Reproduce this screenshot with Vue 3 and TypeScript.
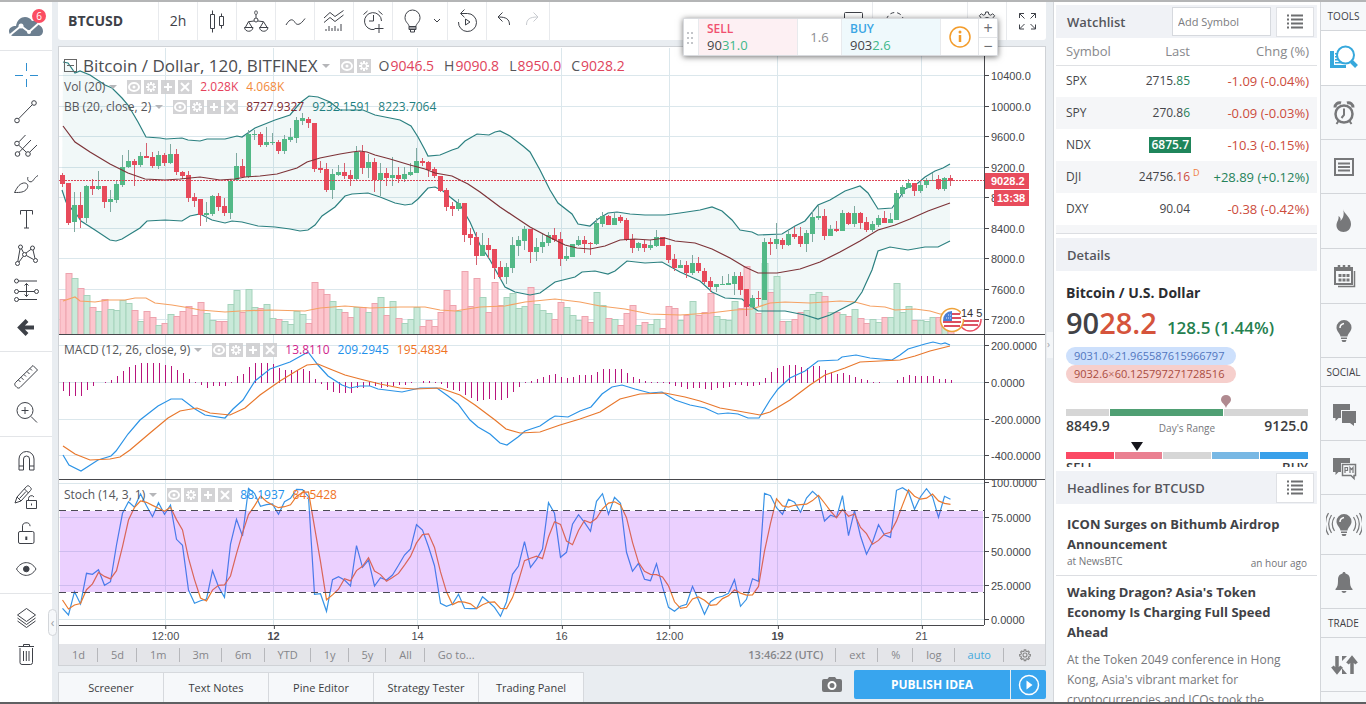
<script setup lang="ts">
import { ref } from 'vue'

type Tone = 'g' | 'r'
interface Bar { x: number; tone: Tone; top: number; bottom: number; high: number; low: number }

const STEP = 6
const FIRST = 62.5
const PLOT = { left: 59, top: 47, width: 925, height: 578 }

// tone, body top, body bottom, high, low
const candleSource = `r175,184,173,187 r183,223,183,225 g205,222,192,232 r205,218,192,228 g186,218,185,223 r186,189,179,195 g186,189,171,190 r186,202,186,208 g199,202,190,212 g184,200,180,203
g167,185,155,187 g161,167,150,168 r161,165,159,186 g156,165,152,167 r156,158,143,158 r157,166,152,168 g155,166,151,169 r155,163,153,166 g154,163,144,164 r154,172,149,175
r172,176,171,179 r175,198,171,202 r197,201,193,207 r199,215,199,226 g213,215,202,222 g196,214,195,216 r196,207,193,211 r206,213,198,216 g181,213,179,219 g166,180,153,180
r166,177,159,177 g134,177,130,178 g134,135,130,140 r134,145,132,147 g142,145,127,147 g142,143,133,145 r142,151,140,154 g139,151,135,154 g137,140,128,142 g120,138,117,143
g118,121,113,125 r119,123,117,128 r123,169,123,172 r168,170,161,173 r169,190,163,192 g174,190,169,199 g172,175,165,176 r172,176,163,179 r175,179,170,186 g152,179,146,180
r152,168,145,174 g162,168,154,178 r162,180,158,192 g173,180,163,196 r173,178,168,186 g175,178,157,186 r175,179,167,183 g174,179,167,182 g172,175,163,176 g161,173,148,173
r161,163,158,166 r162,170,161,177 r169,176,167,178 r176,191,176,192 r190,207,188,211 r206,209,202,216 g203,209,199,211 r203,235,203,242 r234,238,228,245 r237,256,232,265
g245,256,233,256 r245,250,238,258 r249,268,249,279 r267,277,261,280 g267,277,263,284 g245,268,237,273 g240,246,236,256 g229,241,226,250 r229,252,229,263 g247,252,238,261
g242,247,233,253 g235,243,232,246 r235,240,228,242 r239,259,232,266 g256,259,247,261 g244,257,244,257 g240,245,236,246 r240,244,236,253 r243,244,242,255 g223,244,218,245
g216,224,212,227 r216,225,215,225 g218,225,213,225 r217,221,215,223 r220,240,218,241 r239,248,234,253 g243,248,242,251 r244,248,240,252 g245,248,240,250 g237,246,230,247
r237,246,237,246 r245,260,245,263 r259,268,254,271 g265,268,260,268 r265,273,261,278 g263,273,255,275 r263,271,257,273 r271,282,268,284 r281,287,277,292 g284,287,284,292
g284,285,276,285 g283,285,274,285 g276,284,272,295 r276,290,272,295 r289,307,289,316 g298,307,295,308 r298,299,291,306 g242,300,238,300 r242,244,238,255 g239,244,223,249
r240,245,238,249 g234,245,230,246 r234,237,227,239 r236,244,227,247 g233,244,230,252 g217,234,211,242 g216,218,205,220 r216,236,209,240 g229,236,225,236 r229,231,221,232
g213,231,210,231 r213,224,212,225 g213,224,206,227 r213,223,212,229 r222,230,217,232 g224,230,221,232 g218,225,215,227 r218,223,211,223 g219,223,213,223 g193,220,190,220
g187,194,185,197 g183,188,179,188 r183,191,183,196 g185,191,182,193 g180,185,178,188 g180,181,173,181 r179,189,175,190 g178,189,177,191 r178,181,175,186`

const bars: Bar[] = candleSource.split(/\s+/).map((token, i) => {
  const [top, bottom, high, low] = token.slice(1).split(',').map(Number)
  return { x: FIRST + i * STEP, tone: token[0] as Tone, top, bottom, high, low }
})

const volumeTops = [
  299, 273, 278, 288, 295, 307, 311, 299, 309, 310, 300, 303, 310, 321, 311, 317, 325, 323, 314, 316, 311, 306, 315, 302, 313,
  320, 321, 321, 304, 290, 312, 289, 307, 308, 304, 318, 319, 321, 324, 311, 314, 323, 282, 289, 294, 301, 309, 312, 317, 307,
  307, 312, 303, 297, 315, 301, 318, 323, 319, 307, 326, 320, 326, 312, 290, 305, 311, 271, 306, 278, 297, 312, 282, 305, 297,
  293, 308, 306, 287, 304, 310, 313, 319, 302, 307, 315, 320, 316, 322, 292, 305, 318, 319, 325, 313, 305, 325, 322, 324, 319,
  328, 306, 308, 320, 315, 301, 315, 312, 293, 316, 319, 320, 301, 308, 266, 307, 313, 263, 292, 276, 321, 321, 319, 312, 310,
  294, 292, 296, 312, 312, 314, 316, 309, 318, 323, 319, 322, 317, 317, 283, 312, 306, 320, 320, 321, 317, 317, 318, 323,
]

const histogram = [
  -9, -14, -14, -14, -8, -4, 0, 1, 3, 7, 12, 16, 18, 20, 20, 20, 20, 18, 17, 13, 10, 4, 1, -3, -6, -4, -4, -4, 1, 7, 9, 16, 20,
  20, 20, 19, 15, 13, 13, 13, 14, 12, 4, -2, -8, -10, -11, -11, -11, -6, -6, -4, -4, -6, -5, -4, -3, -3, -1, 0, 2, 2, 1, -2, -6,
  -8, -9, -13, -16, -19, -18, -17, -18, -18, -16, -10, -5, 1, 2, 4, 6, 8, 9, 6, 5, 6, 8, 8, 8, 11, 14, 14, 14, 14, 10, 6, 4, 2,
  1, 1, 1, -2, -4, -5, -7, -6, -6, -7, -8, -6, -6, -5, -3, -3, -4, -4, -3, 5, 11, 15, 17, 18, 18, 16, 15, 17, 17, 13, 11, 9, 10,
  8, 6, 4, 3, 1, 1, 0, 0, 3, 6, 8, 7, 7, 7, 7, 4, 4, 3,
]

// thirds of a pixel below the 420 line
const stochSource = [
  565, 585, 515, 552, 460, 463, 449, 496, 485, 375, 280, 245, 262, 222, 257, 290, 248, 283, 255, 358, 376, 510, 550, 542, 537,
  452, 500, 532, 372, 298, 348, 205, 220, 259, 254, 252, 283, 245, 235, 208, 209, 230, 523, 521, 574, 479, 470, 480, 498, 377,
  442, 420, 498, 473, 480, 465, 436, 405, 387, 314, 330, 380, 437, 550, 559, 552, 523, 565, 566, 566, 530, 545, 562, 589, 546,
  463, 438, 365, 442, 418, 387, 248, 280, 412, 397, 313, 284, 307, 334, 244, 221, 283, 232, 250, 397, 454, 430, 478, 482, 431,
  500, 562, 574, 559, 553, 499, 540, 583, 545, 533, 529, 520, 479, 559, 538, 476, 484, 220, 227, 263, 283, 238, 247, 277, 234,
  214, 230, 303, 286, 292, 227, 347, 272, 348, 403, 367, 314, 345, 352, 211, 203, 215, 268, 230, 206, 230, 292, 229, 238,
]
const stochK = stochSource.map((v) => 420 + v / 3)
const stochD = stochK.map((v, i) => (i === 0 ? 600 : i === 1 ? 609 : (v + stochK[i - 1] + stochK[i - 2]) / 3))
const series = (values: number[]) => values.map((v, i) => `${FIRST + i * STEP},${v.toFixed(1)}`).join(' ')

const upper = '63,62 68,63 75,73 80,71 90,75 105,85 112,88 122,98 128,105 138,122 146,137 160,138 166,139 182,138 188,140 200,141 207,139 225,139 237,136 242,137 255,128 275,120 290,115 300,103 309,96 318,97 330,102 340,110 363,110 375,115 390,118 400,120 411,126 418,137 425,150 428,156 440,155 452,150 458,148 465,141 477,134 489,135 495,132 500,131 510,136 523,146 530,152 540,170 550,190 558,203 572,214 578,224 590,226 598,219 608,213 617,212 630,214 645,215 665,215 680,213 700,210 712,207 722,211 732,220 740,230 752,232 758,235 782,234 795,226 805,221 818,205 830,200 845,191 860,186 868,193 878,209 892,208 900,197 905,189 918,183 925,177 935,171 943,168 950,164'
const basis = '63,126 75,142 90,152 110,164 128,173 145,179 165,180 180,179 200,177 220,180 235,179 245,177 260,176 277,174 297,168 307,162 320,158 340,154 352,152 360,151 367,152 375,155 390,159 400,162 410,165 425,169 435,173 452,176 468,184 480,192 500,207 515,217 530,227 545,235 565,245 577,248 590,249 605,246 620,240 635,239 650,240 665,238 675,241 695,243 712,249 730,258 745,267 758,273 777,273 800,269 820,262 840,252 860,241 878,230 895,225 910,219 928,211 950,203'
const lower = '62,190 66,202 70,207 77,215 81,221 95,230 110,240 116,241 122,239 140,228 147,221 165,220 182,221 190,216 200,214 212,220 225,223 232,221 242,222 258,226 275,227 290,229 300,231 308,230 315,225 322,216 335,207 345,196 352,194 368,193 380,197 395,203 405,205 412,204 418,199 428,188 435,187 443,191 450,197 460,205 470,222 480,245 490,260 505,287 515,292 530,295 540,293 555,282 575,277 582,272 595,271 608,274 615,271 627,261 645,263 662,262 680,272 700,281 712,292 725,298 742,299 748,304 758,311 785,311 805,315 818,319 830,315 855,302 862,292 872,270 878,251 890,247 908,250 925,247 938,247 950,241'
const band = `${upper} ${lower.split(' ').reverse().join(' ')}`
const volumeAverage = '63,301 75,297 80,301 95,302 108,300 125,300 135,298 146,298 155,303 172,305 190,308 200,310 225,312 240,311 270,310 305,311 320,308 345,306 370,308 400,307 425,307 440,310 455,311 480,307 505,306 525,302 555,299 580,302 600,306 625,309 650,314 680,315 710,313 735,310 752,309 770,303 785,302 810,303 840,301 855,302 870,306 885,307 895,310 915,309 930,311 940,314 950,314'
const macd = '63,455 69,465 81,471 98,460 111,456 116,451 128,434 140,420 158,406 171,399 182,399 195,409 205,415 225,418 233,409 243,400 255,381 270,369 290,362 308,352 318,365 328,376 342,385 350,388 360,386 370,386 378,389 402,392 420,388 437,388 448,396 458,404 470,420 478,427 490,434 500,443 507,445 518,437 525,431 540,426 550,419 555,416 568,417 580,411 591,407 602,394 612,387 622,385 635,389 650,393 662,392 675,400 690,405 705,408 718,414 728,413 738,414 748,418 759,418 770,400 778,389 790,378 805,371 818,361 838,360 842,357 856,355 870,358 892,360 900,355 908,349 925,344 933,342 941,344 945,343 950,345'
const signal = '63,446 75,454 90,460 110,459 120,457 130,450 150,433 168,418 180,411 197,408 210,413 230,415 245,408 260,395 280,381 298,370 307,365 318,364 330,369 345,375 360,379 380,384 400,388 415,389 440,388 460,395 475,405 495,420 506,429 520,433 540,432 560,425 580,419 600,412 620,399 640,394 665,393 685,397 700,401 720,408 738,411 760,415 770,412 790,400 810,385 825,375 845,368 860,362 880,361 900,360 915,356 930,351 950,346'

const levels = [
  { y: 75, label: '10400.0' }, { y: 106, label: '10000.0' }, { y: 136, label: '9600.0' }, { y: 167, label: '9200.0' },
  { y: 197, label: '8800.0' }, { y: 228, label: '8400.0' }, { y: 258, label: '8000.0' }, { y: 289, label: '7600.0' },
  { y: 319, label: '7200.0' }, { y: 345, label: '200.0000' }, { y: 382, label: '0.0000' }, { y: 419, label: '-200.0000' },
  { y: 455, label: '-400.0000' }, { y: 483, label: '100.0000' }, { y: 517, label: '75.0000' }, { y: 551, label: '50.0000' },
  { y: 585, label: '25.0000' }, { y: 619, label: '0.0000' },
]
const times = [
  { x: 165, label: '12:00' }, { x: 273, label: '12', strong: true }, { x: 417, label: '14' }, { x: 561, label: '16' },
  { x: 669, label: '12:00' }, { x: 777, label: '19', strong: true }, { x: 921, label: '21' },
]
const pctY = (y: number) => `${((y - PLOT.top) / PLOT.height) * 100}%`
const pctX = (x: number) => `${((x - PLOT.left) / PLOT.width) * 100}%`

const gearPath = '<path d="M12.7 5h2.6l.5 2.4 1.9.8 2-1.4 1.9 1.9-1.4 2 .8 1.9 2.4.5v2.6l-2.4.5-.8 1.9 1.4 2-1.9 1.9-2-1.4-1.9.8-.5 2.4h-2.6l-.5-2.4-1.9-.8-2 1.4-1.9-1.9 1.4-2-.8-1.9-2.4-.5v-2.6l2.4-.5.8-1.9-1.4-2 1.9-1.9 2 1.4 1.9-.8z"/><circle cx="14" cy="14" r="3.5"/>'
const icons: Record<string, string> = {
  cross: '<g stroke="#2f8fd0"><path d="M14.5 2v8M14.5 18v8M3 14.500h8M18 14.500h8"/></g>',
  trend: '<circle cx="5" cy="23.500" r="2.300"/><circle cx="22" cy="6" r="2.300"/><path d="M6.700 21.700 20.300 7.700"/>',
  fork: '<circle cx="5" cy="10.500" r="2.300"/><circle cx="5.500" cy="21" r="2.300"/><circle cx="16" cy="21" r="2.300"/><path d="M7 8.800 13.500 2M7.200 19.200 19 7M6.700 12.200l7.600 7M17.700 19.200 25 12"/>',
  brush: '<path d="M2.500 23.500c2-3.500 4-8.500 9-9.500 3.500-.5 5.500 2.500 3.500 5.500-2.500 4-7 4-12.500 4zM16 8c-1 2 0 5 3 4.800 2.500-.3 2.500-3.600 7-6.300"/>',
  text: '<path d="M8.500 9.500v-4h12v4M14.500 5.500V23M12 23h5"/>',
  pattern: '<circle cx="8.500" cy="6" r="2"/><circle cx="20.500" cy="7" r="2"/><circle cx="12.500" cy="13.500" r="2"/><circle cx="5.500" cy="22.500" r="2"/><circle cx="23.500" cy="19.500" r="2"/><path d="m8 8-2.200 12.500M9.500 7.800l2 3.800M14 12l5-3.700M21 9l2 8.500M11.300 15.200 7 21M14.300 14.500l7.300 4"/>',
  measure: '<circle cx="4.500" cy="4" r="2"/><circle cx="4.500" cy="14.500" r="2"/><circle cx="24.500" cy="14.500" r="2"/><circle cx="4.500" cy="22.500" r="2"/><path d="M6.500 4H25M6.500 14.500h16M6.500 22.500H25M14.500 6.500v13M12.500 8.500l2-2 2 2M12.500 17.500l2 2 2-2"/>',
  back: '<path d="M22 14.500H9M15 7.500l-7 7 7 7" stroke-width="4"/>',
  ruler: '<path d="M3.500 20.500 21 3.500l4.500 4.500L8 25.500c-1 .8-2 .8-3 0l-1.500-1.500c-1-1-1-2.500 0-3.500zM18 6.500l2 2M15 9.500l2.500 2.500M12 12.500l2 2M9 15.300l2.500 2.500M6.500 18l2 2"/>',
  zoom: '<circle cx="13" cy="12.500" r="8"/><path d="m19 18.500 6 6M13 9v7M9.500 12.500h7"/>',
  magnet: '<path d="M7 23V12a7.500 7.500 0 0 1 15 0v11h-4.500V12a3 3 0 0 0-6 0v11zM7 19h4.500M17.500 19H22"/>',
  pencilLock: '<path d="m3 20 2-6L14.500 3.500c1-1 2-1 3 0l1 1c1 1 1 2 0 3L9 18zM5 14l4 4M12.500 6l4 4M7.500 15.500l6.500-7"/><path d="M14.500 17.500h10v8h-10zM19.500 20.500v2M16.500 17.500v-2a3 3 0 0 1 5.500-1.500"/>',
  unlock: '<rect x="6.500" y="12.500" width="15.500" height="12" rx="1.500"/><path d="M10.500 12.500V8a3.800 3.800 0 0 1 7.600-.8"/><path d="M14.300 17.500v3.500" stroke-width="2"/>',
  eye: '<path d="M4.500 14c5-8.500 14.500-8.500 19.500 0-5 8.500-14.500 8.500-19.500 0z"/><circle cx="14.300" cy="14" r="2.800" fill="currentColor"/>',
  layers: '<path d="m14.500 4.500 9 6.500-9 6.500-9-6.500zM5.500 14l9 6.500 9-6.500M5.500 17l9 6.500 9-6.500"/>',
  trash: '<path d="M8 8v14.500a2 2 0 0 0 2 2h8.500a2 2 0 0 0 2-2V8M6.500 6.500H22M11.500 6V4.500h6V6M11.500 11v10M14.300 11v10M17 11v10"/>',
  candles: '<path d="M7.500 7.500h4v14h-4zM9.500 3.500v4M9.500 21.500v4M16.500 9.500h4v9h-4zM18.500 6.500v3M18.500 18.500v3"/>',
  compare: '<circle cx="14" cy="13" r="2"/><path d="M14 10.800V8M14 3.500c2 1.200 1.500 3.500 0 4.500-1.500-1-2-3.300 0-4.500zM12 14l-5.500.7L3 21M6.500 14.700 10.500 21M16 14l5.500.7L17.800 21M21.500 14.700 25.500 21M2.500 20.500h8.500c-.5 5-8 5-8.500 0zM17.500 20.500H26c-.5 5-8 5-8.500 0z"/>',
  wave: '<path d="M5 18c4-7 7-6 9-2.500 2 3 5 3 10-4"/>',
  indicators: '<path d="m4 11 6-5.500 5 4 8.500-6M4 15.500l6-5 5 4 8.500-6.500M6 22v2M9 19v5M12 21v3M15 19v5M18 21.500v2.500M21 17v7"/>',
  alarm: '<path d="M22.500 14a8.500 8.500 0 1 0-7 8.500M14.500 8v6H10M4.500 7.500 8.500 4M19.500 4l4 3.500M20 17v9M15.500 21.500h9" />',
  bulb: '<path d="M11 19.500c0-3-4-4-4-9a7.500 7.500 0 0 1 15 0c0 5-4 6-4 9zM11 19.500v3h7v-3M11 21h7M12.500 22.500v2.500h4v-2.500"/>',
  replay: '<path d="M8 6.500h6.500a9 9 0 1 1-9 8.500M11.500 2.500 7.500 6.500l4 3.800M12.500 12v6l4.500-3z"/>',
  undo: '<path d="M19.500 20c0-6-3.500-8-11-8M12.500 7.500 8 12l4.500 4.500"/>',
  redo: '<g stroke="#c8cbd0"><path d="M8.500 20c0-6 3.500-8 11-8M15.500 7.500 20 12l-4.500 4.500"/></g>',
  layout: '<rect x="5.500" y="5.500" width="18" height="16" rx="1"/>',
  dashed: '<circle cx="14" cy="14" r="8.500" stroke-dasharray="4 3"/>',
  gear: gearPath,
  full: '<path d="M6.500 11V6.500H11M6.500 6.500l5 5M18 6.500h4.500V11M22.500 6.500l-5 5M6.500 17.500V22H11M6.500 22l5-5M18 22h4.500v-4.500M22.500 22l-5-5"/>',
  watch: '<g stroke="none" fill="#36a8dc"><path d="M0 7h4v17H0zM4 21h12v3H4z"/><path d="M5 9h3v1.500H5zM5 12h2v1.500H5zM5 15h4v1.500H5zM5 18h7v1.500H5z"/></g><g stroke="#36a8dc"><circle cx="15.500" cy="11" r="8.500" stroke-width="2"/><path d="m21.500 17.500 5 5" stroke-width="4"/></g>',
  clock: '<circle cx="14" cy="15" r="8.500" stroke-width="2.500"/><path d="M14 9.500V16l-2.500 3M8.500 22l-2 3M19.500 22l2 3" stroke-width="2"/><path d="M5 8.500a4.500 4.500 0 0 1 6-4.500M23 8.500A4.500 4.500 0 0 0 17 4" stroke-width="3"/>',
  news: '<path d="M5 6h18v16H5z" stroke-width="2"/><path d="M8 10.500h12M8 14h12M8 17.500h12" stroke-width="2"/>',
  fire: '<path stroke="none" fill="currentColor" d="M13 2c1 5 8 8 8 15 0 5-3.500 8-7.500 8S6 22 6.500 17.500C7 14 9 13 8.500 9c2 1 2.500 3 2 5 3-3 4-7 2.500-12z"/>',
  calendar: '<path d="M5 6h17v16H5zM5 8h17" stroke-width="2"/><path d="M24.500 9v15.500H8" stroke-width="1.500"/><path d="M9 3v5M14 3v5M19 3v5" stroke-width="2.500"/><path d="M8.500 13.500h11M8.500 18h11" stroke-width="3" stroke-dasharray="3 1"/>',
  idea: '<path stroke="none" fill="currentColor" d="M14 3a7.500 7.500 0 0 1 7.500 7.500c0 4-3.500 5.500-4 9h-7c-.5-3.500-4-5-4-9A7.500 7.500 0 0 1 14 3zM11 20.500h6v1.500h-6zM11.500 23h5l-1 2h-3z"/><path d="M10 11c0-2.500 1.500-4 4-4.500" stroke="#fff" stroke-width="1.500"/>',
  chat: '<path stroke="none" fill="currentColor" d="M3 4h17v6H11v8H8.500l-3 3v-3H3zM12 11h14v12h-2v3l-4-3h-8z"/>',
  pm: '<path stroke="none" fill="currentColor" d="M3 4h17v5H11v9H8.500l-3 3v-3H3z"/><path d="M12.500 10.500h13v11h-1.500v3l-3-3h-8.500z" stroke-width="1.500"/><path d="M15 19v-5.500h2.500v3H15M20 19v-5.500l1.500 2 1.500-2V19" stroke-width="1.200"/>',
  bell: '<path stroke="none" fill="currentColor" d="M14 4c1 0 1.500.7 1.500 1.500C19 6.300 20 9 20 12c0 5 .5 7 2.500 9v1h-17v-1c2-2 2.500-4 2.500-9 0-3 1-5.700 4.500-6.500C12.500 4.700 13 4 14 4zM11.500 23h5c-.5 2.500-4.500 2.500-5 0z"/>',
  trade: '<path d="M7 5v15M2.500 15.500 7 21l4.500-5.500M22 23V8M17.500 12.500 22 7l4.500 5.500" stroke-width="3.500"/><path stroke="none" fill="currentColor" d="M12 5h5l-5 5zM12 17l5 6h-5z"/>',
}

const toolGroups = [
  [['cross', 'Crosshair'], ['trend', 'Trend line'], ['fork', 'Pitchfork'], ['brush', 'Brush'], ['text', 'Text'], ['pattern', 'Patterns'], ['measure', 'Prediction'], ['back', 'Back']],
  [['ruler', 'Ruler'], ['zoom', 'Zoom in']],
  [['magnet', 'Magnet'], ['pencilLock', 'Stay in drawing mode'], ['unlock', 'Lock drawings'], ['eye', 'Hide drawings']],
  [['layers', 'Object tree'], ['trash', 'Remove']],
]
const ranges = ['1d', '5d', '1m', '3m', '6m', 'YTD', '1y', '5y', 'All', 'Go to...']
const panels = ['Screener', 'Text Notes', 'Pine Editor', 'Strategy Tester', 'Trading Panel']
const quotes = [
  { s: 'SPX', a: '2715.', b: '85', up: true, c: '-1.09 (-0.04%)' },
  { s: 'SPY', a: '270.8', b: '6', up: true, c: '-0.09 (-0.03%)' },
  { s: 'NDX', a: '6875.7', b: '', flash: true, c: '-10.3 (-0.15%)' },
  { s: 'DJI', a: '24756.', b: '16', delayed: true, c: '+28.89 (+0.12%)' },
  { s: 'DXY', a: '90.04', b: '', c: '-0.38 (-0.42%)' },
]
const rail = [
  { t: 'TOOLS' }, { i: 'watch', n: 'Watchlist', on: true }, { i: 'clock', n: 'Alerts' }, { i: 'news', n: 'News' }, { i: 'fire', n: 'Hotlists', mid: true },
  { i: 'calendar', n: 'Calendar', mid: true }, { i: 'idea', n: 'Ideas' }, { t: 'SOCIAL' }, { i: 'chat', n: 'Chats' }, { i: 'pm', n: 'Private messages' },
  { i: 'stream', n: 'Idea stream', tall: true }, { i: 'bell', n: 'Notifications' }, { t: 'TRADE' }, { i: 'trade', n: 'Order panel' },
]
const legends = [
  { k: 'lg-vol', name: 'Vol (20)', values: [['2.028K', '#e5415c'], ['4.068K', '#f28a3c']] },
  { k: 'lg-bb', name: 'BB (20, close, 2)', values: [['8727.9327', '#7e2b33'], ['9232.1591', '#1f7f80'], ['8223.7064', '#1f7f80']] },
  { k: 'lg-macd', name: 'MACD (12, 26, close, 9)', values: [['13.8110', '#d0248c'], ['209.2945', '#2290ea'], ['195.4834', '#ef7324']] },
  { k: 'lg-stoch', name: 'Stoch (14, 3, 1)', values: [['88.1937', '#2290ea'], ['84.5428', '#ef7324']] },
]
const symbol = ref('')
</script>

<template>
  <div class="app">
    <div class="body">
      <aside class="tools">
        <div class="brand">
          <svg width="36" height="22" viewBox="0 0 36 22" aria-label="Home">
            <path d="M7 10C8 4 12 1 16 1c3 0 5 1 7 4 3-1 6 0 7 4 2 1 4 3 4 6 0 3-2 5-5 5H5c-3 0-5-2-5-5s3-5 7-5z" fill="#6c7f90" />
            <path d="m1 19 11-9 8 6 10-9" fill="none" stroke="#fff" stroke-width="2" />
            <circle cx="12" cy="10" r="2.500" fill="#fff" /><circle cx="20" cy="16" r="2" fill="#fff" />
          </svg>
          <span class="badge">6</span>
        </div>
        <div v-for="(group, g) in toolGroups" :key="g" class="group">
          <button v-for="[icon, name] in group" :key="icon" :aria-label="name" class="tool">
            <svg class="ico" viewBox="0 0 28 28" v-html="icons[icon]" />
          </button>
        </div>
        <button class="collapse" aria-label="Hide toolbar">‹</button>
      </aside>

      <main class="center">
        <header class="topbar">
          <button class="cell symbol">BTCUSD</button>
          <button class="cell interval">2h</button>
          <button v-for="n in ['candles', 'compare', 'wave', 'indicators', 'alarm']" :key="n" class="cell sq" :aria-label="n">
            <svg class="ico" viewBox="0 0 28 28" v-html="icons[n]" />
          </button>
          <button class="cell ideas" aria-label="Ideas">
            <svg class="ico" viewBox="0 0 28 28" v-html="icons.bulb" />
            <svg width="8" height="6" viewBox="0 0 8 6"><path d="m1 1 3 3 3-3" class="thin" /></svg>
          </button>
          <button class="cell sq" aria-label="Replay"><svg class="ico" viewBox="0 0 28 28" v-html="icons.replay" /></button>
          <div class="cell history">
            <button aria-label="Undo"><svg class="ico" viewBox="0 0 28 28" v-html="icons.undo" /></button>
            <button aria-label="Redo"><svg class="ico" viewBox="0 0 28 28" v-html="icons.redo" /></button>
          </div>
          <span class="spacer"></span>
          <button class="cell sq" aria-label="Layout"><svg class="ico" viewBox="0 0 28 28" v-html="icons.layout" /></button>
          <button class="cell save" aria-label="Save"><svg class="ico" viewBox="0 0 28 28" v-html="icons.dashed" /></button>
          <button class="cell sq" aria-label="Settings"><svg class="ico" viewBox="0 0 28 28" v-html="icons.gear" /></button>
          <button class="cell sq last" aria-label="Fullscreen"><svg class="ico" viewBox="0 0 28 28" v-html="icons.full" /></button>

          <div class="order">
            <svg width="14" height="37" viewBox="0 0 14 37"><g fill="#c4c6ca"><template v-for="r in 3" :key="r"><rect x="3" :y="8 + r * 5" width="2" height="2" /><rect x="7" :y="8 + r * 5" width="2" height="2" /></template></g></svg>
            <button class="side sell"><b>SELL</b><span>90<i>31.0</i></span></button>
            <span class="spread">1.6</span>
            <button class="side buy"><b>BUY</b><span>903<i>2.6</i></span></button>
            <button class="info" aria-label="Information">
              <svg width="24" height="24" viewBox="0 0 24 24"><circle cx="12" cy="12" r="10" fill="none" stroke="#f39c2b" stroke-width="1.500" /><path d="M12 10v7" stroke="#f39c2b" stroke-width="2.500" /><circle cx="12" cy="7" r="1.500" fill="#f39c2b" /></svg>
            </button>
            <div class="steps"><button>+</button><button>−</button></div>
          </div>
        </header>

        <section class="chart">
          <div class="stage">
            <div class="plot">
              <svg class="canvas" viewBox="59 47 925 578" preserveAspectRatio="none">
                <g class="grid">
                  <path v-for="l in levels" :key="l.y" :d="`M59 ${l.y + 0.5}H984`" />
                  <path v-for="t in times" :key="t.x" :d="`M${t.x + 0.5} 48V625`" />
                </g>
                <polygon :points="band" fill="#138484" fill-opacity=".06" />
                <g>
                  <rect v-for="(b, i) in bars" :key="i" :x="b.x - 2.5" :y="volumeTops[i] + 0.5" width="6" :height="334 - volumeTops[i]" :class="['vol', b.tone]" />
                </g>
                <polyline :points="volumeAverage" class="ln" stroke="#f5a163" />
                <polyline :points="upper" class="ln" stroke="#2b8080" />
                <polyline :points="lower" class="ln" stroke="#2b8080" />
                <g v-for="b in bars" :key="b.x" :class="['candle', b.tone]">
                  <path :d="`M${b.x} ${b.high}V${b.low}`" />
                  <rect :x="b.x - 2.5" :y="b.top" width="5" :height="b.bottom - b.top" />
                </g>
                <polyline :points="basis" class="ln" stroke="#7d3338" />
                <path d="M59 180.500H984" stroke="#dd4455" stroke-dasharray="2 1" fill="none" />

                <rect v-for="(h, i) in histogram" :key="i" :x="63 + i * 6" :y="h > 0 ? 383 - h : 382" width="1" :height="Math.abs(h)" class="hist" />
                <polyline :points="macd" class="ln" stroke="#2b93e6" />
                <polyline :points="signal" class="ln" stroke="#e8772c" />

                <polyline :points="series(stochK)" class="ln" stroke="#3793e6" />
                <polyline :points="series(stochD)" class="ln" stroke="#ea7a30" />
                <rect x="60" y="511" width="923" height="81" fill="#9915ff" fill-opacity=".2" />
                <path d="M59 510.500H984M59 592.500H984" stroke="#4b4b55" stroke-dasharray="7 5" />
                <path d="M59 334.500H984M59 479.500H984" stroke="#47484c" />
                <g transform="translate(970 320)">
                  <circle r="11" fill="#fff" stroke="#ea5064" stroke-width="1.500" />
                  <path d="M-9-3H9M-9 1H9M-8 5H8" stroke="#dc5566" stroke-width="2" />
                </g>
                <g transform="translate(952 320)">
                  <circle r="11.500" fill="#fff" stroke="#eea23a" stroke-width="1.500" />
                  <path d="M0-6H8M0-2H9M-9 2H9M-8 6H8" stroke="#dc4f60" stroke-width="2" />
                  <path d="M-9 1A9 9 0 0 1 0-9V1z" fill="#4a7fd4" />
                  <path d="M-6-2h6M-4-5h4" stroke="#dbe7fa" stroke-dasharray="1 1" />
                </g>
              </svg>
              <span class="events" :style="{ left: pctX(961), top: pctY(313) }">14 5</span>

              <div class="legend main">
                <svg width="14" height="14" viewBox="0 0 14 14"><rect x=".5" y=".5" width="12" height="12" fill="none" stroke="#666" /><path d="M3 6.500h7" stroke="#666" /></svg>
                <span class="title">Bitcoin / Dollar, 120, BITFINEX</span>
                <span class="drop"></span>
                <span class="chips">
                  <span><svg viewBox="0 0 14 14"><ellipse cx="7" cy="7" rx="5" ry="4" class="w" /><circle cx="7" cy="7" r="1.500" fill="#fff" /></svg></span>
                  <span><svg viewBox="0 0 14 14"><path d="M7 2v10M2 7h10M3.500 3.500l7 7M10.500 3.500l-7 7" class="w" /><circle cx="7" cy="7" r="2" fill="#cfcfd1" /></svg></span>
                </span>
                <span class="ohlc">O<b>9046.5</b></span><span class="ohlc">H<b>9090.8</b></span><span class="ohlc">L<b>8950.0</b></span><span class="ohlc">C<b>9028.2</b></span>
              </div>
              <div v-for="l in legends" :key="l.k" :class="['legend', 'sub', l.k]">
                <span>{{ l.name }}</span><span class="drop"></span>
                <span class="chips">
                  <span><svg viewBox="0 0 14 14"><ellipse cx="7" cy="7" rx="5" ry="4" class="w" /><circle cx="7" cy="7" r="1.500" fill="#fff" /></svg></span>
                  <span><svg viewBox="0 0 14 14"><path d="M7 2v10M2 7h10M3.500 3.500l7 7M10.500 3.500l-7 7" class="w" /><circle cx="7" cy="7" r="2" fill="#cfcfd1" /></svg></span>
                  <span><svg viewBox="0 0 14 14"><path d="M7 3v8M3 7h8" class="w" /></svg></span>
                  <span><svg viewBox="0 0 14 14"><path d="m3 3 8 8M11 3l-8 8" class="w" /></svg></span>
                </span>
                <span v-for="v in l.values" :key="v[0]" class="value" :style="{ color: v[1] }">{{ v[0] }}</span>
              </div>
            </div>
            <div class="axis">
              <span v-for="l in levels" :key="l.y" class="tick" :style="{ top: pctY(l.y + 0.5) }">{{ l.label }}</span>
              <span class="pane" :style="{ top: pctY(334) }"></span>
              <span class="pane" :style="{ top: pctY(479) }"></span>
              <span class="price" :style="{ top: pctY(173) }">9028.2</span>
              <span class="price timer" :style="{ top: pctY(190) }">13:38</span>
            </div>
          </div>
          <div class="times">
            <div class="scale"><span v-for="t in times" :key="t.x" :class="{ strong: t.strong }" :style="{ left: pctX(t.x + 0.5) }">{{ t.label }}</span></div>
          </div>
          <div class="rangebar">
            <button v-for="r in ranges" :key="r">{{ r }}</button>
            <span class="spacer"></span>
            <button class="clock">13:46:22 (UTC)</button><button>ext</button><button>%</button><button>log</button><button class="auto">auto</button>
            <button class="cog" aria-label="Scale settings"><svg width="16" height="16" viewBox="0 0 28 28"><g fill="none" stroke="#888" stroke-width="2" v-html="icons.gear" /></svg></button>
          </div>
        </section>

        <footer class="bottom">
          <nav><button v-for="p in panels" :key="p">{{ p }}</button></nav>
          <span class="spacer"></span>
          <button class="camera" aria-label="Take a snapshot">
            <svg width="20" height="17" viewBox="0 0 20 17"><path d="M7 1h6l1.500 2H18a2 2 0 0 1 2 2v9a2 2 0 0 1-2 2H2a2 2 0 0 1-2-2V5a2 2 0 0 1 2-2h3.500z" fill="#757678" /><circle cx="10" cy="9.500" r="3.500" fill="none" stroke="#fff" stroke-width="2" /></svg>
          </button>
          <button class="publish">PUBLISH IDEA</button>
          <button class="play" aria-label="Start streaming">
            <svg width="22" height="22" viewBox="0 0 22 22"><circle cx="11" cy="11" r="9.500" fill="none" stroke="#fff" stroke-width="1.500" /><path d="M8.500 6.500v9l6-4.500z" fill="#fff" /></svg>
          </button>
        </footer>
      </main>

      <aside class="side-panel">
        <span class="grip">›</span>
        <section class="card watchlist">
          <header class="head">
            <h2>Watchlist</h2>
            <input v-model="symbol" placeholder="Add Symbol" aria-label="Add Symbol" />
            <button class="menu" aria-label="Watchlist menu"><svg width="16" height="15" viewBox="0 0 16 15"><path d="M0 1.500h2M4 1.500h12M0 5.500h2M4 5.500h12M0 9.500h2M4 9.500h12M0 13.500h2M4 13.500h12" stroke="#6d6e70" stroke-width="2" /></svg></button>
          </header>
          <table>
            <thead><tr><th>Symbol</th><th>Last</th><th>Chng (%)</th></tr></thead>
            <tbody>
              <tr v-for="q in quotes" :key="q.s">
                <td>{{ q.s }}</td>
                <td><span :class="{ flash: q.flash }">{{ q.a }}</span><span :class="q.up ? 'pos' : 'neg'">{{ q.b }}</span><sup v-if="q.delayed">D</sup></td>
                <td :class="q.c[0] === '+' ? 'pos' : 'neg'">{{ q.c }}</td>
              </tr>
              <tr><td></td><td></td><td></td></tr>
            </tbody>
          </table>
        </section>
        <section class="card details">
          <header class="head"><h2>Details</h2></header>
          <div class="detail">
            <h3>Bitcoin / U.S. Dollar</h3>
            <div class="quote"><span class="big">90<i>28.2</i></span><span class="delta">128.5 (1.44%)</span></div>
            <span class="pill bid">9031.0<small>×</small>21.965587615966797</span>
            <span class="pill ask">9032.6<small>×</small>60.125797271728516</span>
            <div class="day">
              <svg class="pin" width="10" height="13" viewBox="0 0 10 13"><path d="M5 13C4 9 0 8 0 4.500a5 4.500 0 0 1 10 0C10 8 6 9 5 13z" fill="#b08a90" /></svg>
              <span class="seg a"></span><span class="seg b"></span><span class="seg c"></span>
            </div>
            <div class="bounds"><b>8849.9</b><span>Day's Range</span><b>9125.0</b></div>
            <div class="rating">
              <svg class="mark" width="12" height="9" viewBox="0 0 12 9"><path d="M0 0h12L6 9z" fill="#16161c" /></svg>
              <span></span><span></span><span></span><span></span><span></span>
            </div>
            <div class="bounds verdict"><b>SELL</b><b>BUY</b></div>
          </div>
        </section>
        <section class="card news">
          <header class="head">
            <h2>Headlines for BTCUSD</h2>
            <button class="menu" aria-label="Headlines menu"><svg width="16" height="15" viewBox="0 0 16 15"><path d="M0 1.500h2M4 1.500h12M0 5.500h2M4 5.500h12M0 9.500h2M4 9.500h12M0 13.500h2M4 13.500h12" stroke="#6d6e70" stroke-width="2" /></svg></button>
          </header>
          <article>
            <h3>ICON Surges on Bithumb Airdrop Announcement</h3>
            <div class="meta"><span>at NewsBTC</span><time>an hour ago</time></div>
          </article>
          <article>
            <h3>Waking Dragon? Asia's Token Economy Is Charging Full Speed Ahead</h3>
            <p>At the Token 2049 conference in Hong Kong, Asia's vibrant market for cryptocurrencies and ICOs took the</p>
          </article>
        </section>
      </aside>

      <nav class="rail">
        <template v-for="r in rail" :key="r.t ?? r.i">
          <span v-if="r.t" class="caption">{{ r.t }}</span>
          <button v-else :aria-label="r.n" :class="{ on: r.on, tall: r.tall, mid: r.mid }">
            <svg v-if="r.i === 'stream'" width="36" height="28" viewBox="-4 0 36 28" class="grey">
              <g v-html="icons.idea" />
              <path d="M4.500 6a13 13 0 0 0 0 14M1.500 4a17 17 0 0 0 0 18M-1.500 2a21 21 0 0 0 0 22M23.500 6a13 13 0 0 1 0 14M26.500 4a17 17 0 0 1 0 18M29.500 2a21 21 0 0 1 0 22" fill="none" stroke="#77787a" stroke-width="1.200" />
            </svg>
            <svg v-else class="ico grey" viewBox="0 0 28 28" v-html="icons[r.i!]" />
          </button>
        </template>
      </nav>
    </div>
  </div>
</template>

<style>
html, body { margin: 0; background: #e9edf0; }
</style>

<style scoped>
* { box-sizing: border-box; }
.app {
  height: 100vh;
  border-top: 2px solid #b4b5b6;
  border-bottom: 2px solid #5f6062;
  background: #e9edf1;
  color: #4a4b4f;
  font: 12px/16px "Trebuchet MS", "Open Sans", "Noto Sans", sans-serif;
  overflow: hidden;
}
button { margin: 0; padding: 0; border: 0; background: none; font: inherit; color: inherit; cursor: pointer; }
h2, h3, p { margin: 0; }
i { font-style: normal; }
.body { display: flex; height: 100%; }
.spacer { flex: 1; }
.ico { width: 28px; height: 28px; flex: none; fill: none; stroke: currentColor; stroke-width: 1; }
.thin { fill: none; stroke: #3e4148; }

.tools { position: relative; width: 52px; flex: none; background: #fff; color: #3e4148; }
.brand { position: relative; height: 48px; padding: 14px 0 0 9px; }
.badge { position: absolute; left: 32px; top: 7px; width: 14px; height: 14px; border-radius: 50%; background: #fb4d63; color: #fff; font-size: 10px; line-height: 14px; text-align: center; }
.group { border-top: 1px solid #e3e5e8; padding: 6px 0; }
.tool { display: flex; width: 52px; height: 36px; align-items: center; justify-content: center; }
.collapse { position: absolute; right: -5px; bottom: 66px; width: 9px; height: 27px; border: 1px solid #d3d6da; border-radius: 5px; background: #f6f8fa; color: #9a9da3; font-size: 12px; line-height: 22px; }

.center { flex: 1; min-width: 0; margin: 0 7px 0 6px; display: flex; flex-direction: column; }
.topbar { position: relative; display: flex; height: 38px; flex: none; background: #fff; color: #3e4148; border-radius: 0 0 3px 3px; }
.cell { display: flex; align-items: center; justify-content: center; border-right: 1px solid #e8eaed; }
.symbol { width: 101px; padding-left: 10px; justify-content: flex-start; font-size: 14px; font-weight: 700; }
.interval { width: 39px; font-size: 14px; }
.sq { width: 39px; }
.sq.last { border: 0; }
.ideas { width: 55px; gap: 7px; padding-right: 2px; }
.history { width: 63px; }
.save { width: 95px; justify-content: flex-start; padding-left: 8px; }
.order { position: absolute; right: 48px; top: 16px; z-index: 3; display: flex; height: 38px; background: #fff; border: 1px solid #d8dade; box-shadow: 0 1px 6px rgba(0, 0, 0, .55); }
.side { width: 100px; padding: 2px 8px; display: flex; flex-direction: column; align-items: flex-start; line-height: 16px; border-left: 1px solid #e8eaed; border-right: 1px solid #e8eaed; }
.side b { font-weight: 600; }
.side span { font-size: 13px; color: #45464a; }
.side i { color: #40b88a; }
.sell { background: #fdf0f3; }
.sell b { color: #f05070; }
.buy { background: #eff9fc; }
.buy b { color: #3aa5e4; }
.spread { width: 43px; text-align: center; line-height: 37px; font-size: 13px; color: #8b8c90; }
.info { width: 37px; display: flex; align-items: center; justify-content: center; }
.steps { width: 19px; border-left: 1px solid #e3e5e8; display: flex; flex-direction: column; font-size: 16px; color: #6d6e72; }
.steps button { flex: 1; line-height: 16px; }
.steps button + button { border-top: 1px solid #e3e5e8; }

.chart { flex: 1; min-height: 0; margin-top: 6px; display: flex; flex-direction: column; background: #fff; border: 1px solid #cfd2d6; }
.stage { flex: 1; min-height: 0; display: flex; }
.plot { position: relative; flex: 1; min-width: 0; }
.canvas { display: block; width: 100%; height: 100%; position: absolute; }
.grid path { stroke: #dbe7ec; fill: none; }
.ln { fill: none; stroke-width: 1.2; }
.vol.g { fill: #c9e9d9; stroke: #a5d3bc; }
.vol.r { fill: #fcc5cd; stroke: #eda3ae; }
.candle.g path { stroke: #7fa9a0; }
.candle.r path { stroke: #d4606f; }
.candle.g rect { fill: #53b987; }
.candle.r rect { fill: #e74a5b; }
.hist { fill: #b8147c; }
.events { position: absolute; font: 11px/12px "Liberation Sans", Arial, sans-serif; margin-top: -6px; color: #333; background: #fff; }
.legend { position: absolute; left: 5px; display: flex; align-items: center; white-space: nowrap; color: #55565a; }
.main { top: 9px; height: 20px; }
.title { margin-left: 5px; font-size: 17px; color: #4c4d51; }
.drop { margin: 0 0 0 4px; border: 4px solid transparent; border-top-color: #b5b6b9; border-bottom: 0; }
.chips { display: flex; gap: 3px; margin: 0 8px 0 10px; }
.chips > span { display: flex; width: 14px; height: 14px; background: #cfcfd1; opacity: .9; }
.chips svg { width: 14px; height: 14px; }
.w { fill: none; stroke: #fff; stroke-width: 2; }
.ohlc { font-size: 14px; margin-right: 10px; }
.ohlc b { font-weight: 400; color: #e0445c; margin-left: 1px; }
.sub { height: 16px; }
.value { margin-right: 8px; }
.lg-vol { top: 32px; }
.lg-bb { top: 52px; }
.lg-macd { top: calc(50% + 6px); }
.lg-stoch { top: calc(76% + 1px); }
.axis { position: relative; width: 61px; flex: none; border-left: 1px solid #47484c; font: 11px/12px "Liberation Sans", Arial, sans-serif; color: #45464a; }
.tick { position: absolute; left: 6px; transform: translateY(-50%); }
.tick::before { content: ""; position: absolute; left: -6px; top: 5px; width: 4px; height: 1px; background: #47484c; }
.pane { position: absolute; left: 0; right: 0; height: 1px; background: #47484c; }
.price { position: absolute; left: 0; width: 44px; padding-left: 6px; height: 16px; line-height: 16px; background: #e84c5c; color: #fff; font-weight: 700; }
.timer { left: 9px; width: 35px; padding-left: 3px; height: 16px; }
.times { height: 19px; flex: none; padding-right: 61px; }
.scale { position: relative; height: 19px; border-top: 1px solid #47484c; font: 11px/20px "Liberation Sans", Arial, sans-serif; }
.scale span { position: absolute; transform: translateX(-50%); }
.scale span::before { content: ""; position: absolute; left: 50%; top: 0; width: 1px; height: 3px; background: #47484c; }
.scale .strong { font-weight: 700; }
.rangebar { display: flex; flex: none; align-items: center; gap: 1px; height: 21px; padding-left: 1px; background: #e4e5e9; color: #85868a; font-size: 11px; }
.rangebar button { padding: 0 12px; line-height: 14px; border-right: 1px solid #b6b7bb; }
.rangebar button:nth-child(10), .rangebar .cog { border: 0; }
.rangebar .clock { font-weight: 600; }
.rangebar .auto { color: #45a9dd; }
.rangebar .cog { display: flex; }
.bottom { display: flex; flex: none; height: 32px; margin-top: 4px; align-items: flex-start; }
.bottom nav { display: flex; height: 30px; margin-top: 2px; border: 1px solid #d6d9dd; border-width: 1px 0 0 1px; background: #f6f8fa; }
.bottom nav button { width: 105px; border-right: 1px solid #d6d9dd; font-size: 11px; color: #3c3d41; }
.camera { margin: 6px 12px 0 0; height: 17px; }
.publish, .play { height: 29px; background: #38a5ee; color: #fff; font-size: 12px; font-weight: 700; }
.publish { width: 156px; border-radius: 2px 0 0 2px; }
.play { width: 35px; margin-left: 1px; display: flex; align-items: center; justify-content: center; border-radius: 0 2px 2px 0; }

.side-panel { position: relative; width: 267px; flex: none; display: flex; flex-direction: column; gap: 4px; padding: 3px 3px 0 2px; background: #fff; border-left: 1px solid #d3d6da; }
.grip { position: absolute; left: -7px; top: 330px; width: 6px; height: 26px; line-height: 24px; background: #f4f6f8; color: #a0a3a8; font-size: 10px; }
.card { overflow: hidden; flex: none; }
.watchlist { height: 229px; border-bottom: 1px solid #dcdee2; }
.details { height: 229px; }
.news { flex: 1; min-height: 0; }
.head { display: flex; height: 33px; align-items: center; padding: 0 3px 0 11px; background: #f0f2f6; gap: 5px; }
.head h2 { flex: 1; font-size: 13px; font-weight: 600; color: #55565c; }
.head input { width: 99px; height: 29px; padding: 0 5px; border: 1px solid #d6d9de; background: #fff; font: inherit; font-size: 11px; color: #7b7c80; outline: 0; }
.head input::placeholder { color: #7b7c80; opacity: 1; }
.menu { width: 38px; height: 30px; display: flex; align-items: center; justify-content: center; background: #fff; border: 1px solid #dfe1e5; }
table { width: 100%; border-collapse: collapse; table-layout: fixed; }
th { height: 27px; padding: 0; font-weight: 400; font-size: 13px; color: #87888c; border-bottom: 1px solid #dfe1e4; }
th:first-child, td:first-child { width: 60px; padding-left: 10px; text-align: left; }
th:nth-child(2), td:nth-child(2) { width: 74px; text-align: right; padding: 0; position: relative; }
th:nth-child(3), td:nth-child(3) { text-align: right; padding: 0 8px 0 0; font-size: 13px; }
td { height: 32px; white-space: nowrap; color: #45464a; }
tbody tr:nth-child(even) { background: #f5f6f8; }
.pos, td.pos { color: #26835a; }
.neg, td.neg { color: #cc4c3c; }
.flash { background: #1f855b; color: #fff; padding: 0 2px; display: inline-block; font-weight: 600; margin-right: -1px; }
sup { position: absolute; left: 77px; top: 6px; font-size: 9px; line-height: 12px; color: #f07c3c; }
.detail { padding: 12px 9px 0 10px; }
.detail h3 { font-size: 14px; line-height: 20px; font-weight: 700; color: #2c2d31; }
.quote { display: flex; align-items: baseline; gap: 10px; line-height: 40px; font-weight: 600; height: 40px; margin-bottom: 4px; }
.big { font-size: 29px; color: #414246; }
.big i { color: #d5543c; }
.delta { font-size: 17px; color: #25804f; }
.pill { display: block; width: 170px; height: 18px; line-height: 18px; border-radius: 9px; padding-left: 8px; font-size: 11px; }
.pill small { font-size: 11px; opacity: .7; }
.bid { background: #cde0fc; color: #5176be; }
.ask { background: #f6cfcc; color: #a94c40; }
.day { position: relative; display: flex; gap: 1px; margin-top: 26px; height: 7px; }
.seg { background: #d6d6d6; flex: 43; }
.seg.b { background: #4f9f73; flex: 112; }
.seg.c { flex: 84; }
.pin { position: absolute; left: 64%; top: -14px; }
.bounds { display: flex; justify-content: space-between; line-height: 20px; }
.bounds b { font-size: 14px; font-weight: 600; color: #3c3d41; }
.bounds span { font-size: 10px; padding-top: 2px; color: #76777b; }
.rating { position: relative; display: flex; gap: 1px; height: 7px; margin-top: 14px; }
.rating span { flex: 1; background: #d6d6d6; }
.rating span:nth-of-type(1) { background: #fb4964; }
.rating span:nth-of-type(2) { background: #ea8091; }
.rating span:nth-of-type(4) { background: #78b8e4; }
.rating span:nth-of-type(5) { background: #38a0ea; }
.mark { position: absolute; left: 27%; top: -10px; }
.verdict b { line-height: 16px; font-size: 13px; }
article { padding: 10px 10px 0 11px; }
article h3 { font-size: 13px; line-height: 20px; font-weight: 700; color: #414246; }
article + article { border-top: 1px solid #dcdee2; padding-top: 6px; }
.meta { display: flex; justify-content: space-between; font-size: 10px; line-height: 14px; height: 21px; color: #737478; }
.meta time { padding-top: 2px; }
article p { margin-top: 8px; font-size: 12px; line-height: 20px; color: #76777b; }

.rail { width: 46px; flex: none; display: flex; flex-direction: column; background: #f6f8fa; border-left: 1px solid #d3d6da; }
.rail > * { flex: none; height: 54px; border-bottom: 1px solid #d3d6da; display: flex; align-items: center; justify-content: center; }
.rail .caption { height: 29px; font-size: 10px; color: #3f4044; }
.rail .on { background: #fff; height: 55px; }
.rail .mid { height: 55px; }
.rail .tall { height: 60px; }
.grey { color: #77787a; fill: none; stroke: currentColor; }
</style>
